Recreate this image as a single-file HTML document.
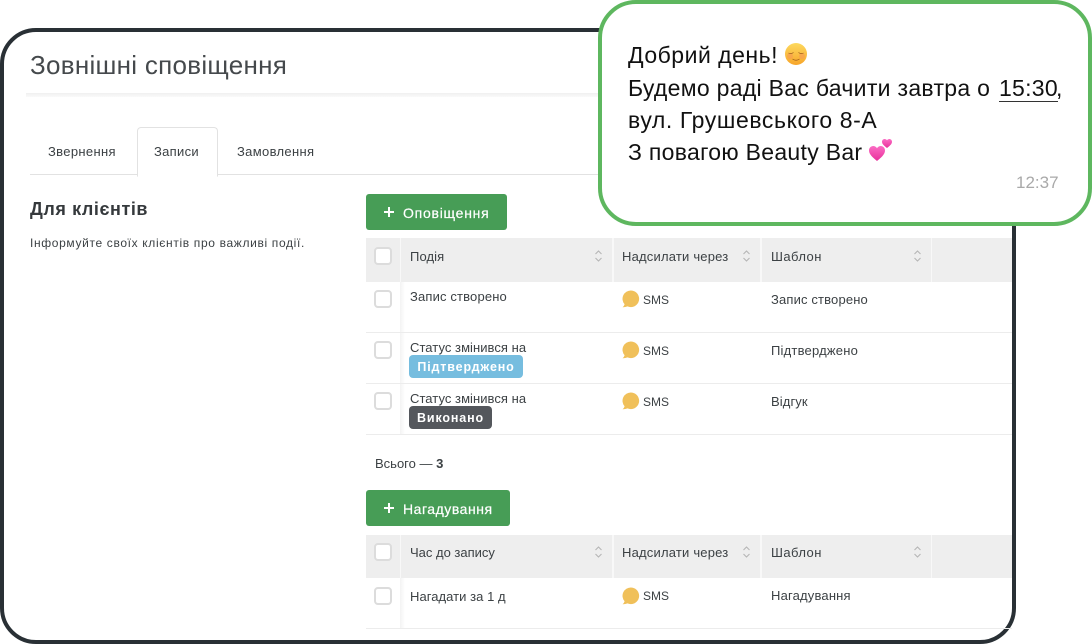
<!DOCTYPE html>
<html lang="uk"><head><meta charset="utf-8"><style>
html,body{margin:0;padding:0}
body{width:1092px;height:644px;background:#fff;overflow:hidden;position:relative;font-family:"Liberation Sans","DejaVu Sans",sans-serif;color:#3c4144}
.a{position:absolute;white-space:nowrap}
.t{font-size:13px;line-height:16px;letter-spacing:.15px}
.s{font-size:12px;line-height:16px;letter-spacing:0}
.frame{position:absolute;left:0;top:28px;width:1008px;height:608px;border:4px solid #293035;border-radius:36px;background:#fff}
.hd{position:absolute;height:44px;background:#eeeeee}
.gap{position:absolute;left:366px;width:646px;background:#f8f8f8}
.cb{position:absolute;left:374px;width:14px;height:14px;border:2px solid #dcdcdc;border-radius:4px;background:#fff}
.line{position:absolute;left:366px;width:646px;height:1px;background:#ececec}
.btn{position:absolute;left:366px;height:36px;background:#479d56;border-radius:3px;color:#fff;font-size:14px;line-height:36px;-webkit-text-stroke:.2px #fff}
.pv{position:absolute;left:18px;top:17px;width:10px;height:2px;background:#fff}
.ph{position:absolute;left:22px;top:13px;width:2px;height:10px;background:#fff}
.dot{position:absolute;left:622px}
.st{position:absolute;width:9px;height:14px}
.lbl{position:absolute;left:409px;height:23px;border-radius:4px;color:#fff;font-weight:700;font-size:12.5px;line-height:25px;text-align:center;letter-spacing:.85px}
.bub{position:absolute;left:598px;top:0;width:486px;height:218px;border:4px solid #5eb75f;border-radius:38px;background:#fff}
.m{position:absolute;left:628px;font-size:23px;line-height:32px;color:#111;white-space:nowrap}
.strip{position:absolute;left:400px;width:5px;background:linear-gradient(to right,#f3f3f3,#fff)}
</style></head><body>
<div class="frame"></div>
<div class="a" style="left:30px;top:49px;font-size:26px;line-height:32px;color:#45494c;letter-spacing:.28px">Зовнішні сповіщення</div>
<div class="a" style="left:26px;top:93px;width:986px;height:4px;background:linear-gradient(#f0f0f0,#fafafa)"></div>
<div class="a" style="left:30px;top:174px;width:982px;height:1px;background:#e2e2e2"></div>
<div class="a" style="left:137px;top:127px;width:79px;height:48px;border:1px solid #e2e2e2;border-bottom:1px solid #fff;border-radius:4px 4px 0 0;background:#fff"></div>
<div class="a t" style="left:48px;top:144px;letter-spacing:.33px">Звернення</div>
<div class="a t" style="left:154px;top:144px;letter-spacing:.3px">Записи</div>
<div class="a t" style="left:237px;top:144px;letter-spacing:.33px">Замовлення</div>
<div class="a" style="left:30px;top:198px;font-size:18px;line-height:22px;font-weight:700;color:#35393c;letter-spacing:.58px">Для клієнтів</div>
<div class="a" style="left:30px;top:235px;font-size:12px;line-height:16px;letter-spacing:.65px">Інформуйте своїх клієнтів про важливі події.</div>

<div class="btn" style="top:194px;width:141px"><span class="pv"></span><span class="ph"></span><span class="a" style="left:37px;top:1px;letter-spacing:.75px">Оповіщення</span></div>

<div class="gap" style="top:238px;height:44px"></div>
<div class="hd" style="left:366px;top:238px;width:34px"></div>
<div class="hd" style="left:401px;top:238px;width:211px"></div>
<div class="hd" style="left:614px;top:238px;width:146px"></div>
<div class="hd" style="left:762px;top:238px;width:169px"></div>
<div class="hd" style="left:932px;top:238px;width:80px"></div>
<div class="cb" style="top:247px"></div>
<div class="a t" style="left:410px;top:249px;letter-spacing:.1px">Подія</div>
<div class="a t" style="left:622px;top:249px;letter-spacing:.2px">Надсилати через</div>
<div class="a t" style="left:771px;top:249px;letter-spacing:.45px">Шаблон</div>
<svg class="st" style="left:594px;top:249px" viewBox="0 0 9 14"><path d="M1.5 5 4.5 2 7.5 5M1.5 9 4.5 12 7.5 9" fill="none" stroke="#b4b4b4" stroke-width="1"/></svg>
<svg class="st" style="left:742px;top:249px" viewBox="0 0 9 14"><path d="M1.5 5 4.5 2 7.5 5M1.5 9 4.5 12 7.5 9" fill="none" stroke="#b4b4b4" stroke-width="1"/></svg>
<svg class="st" style="left:913px;top:249px" viewBox="0 0 9 14"><path d="M1.5 5 4.5 2 7.5 5M1.5 9 4.5 12 7.5 9" fill="none" stroke="#b4b4b4" stroke-width="1"/></svg>

<div class="strip" style="top:282px;height:152px"></div>
<div class="cb" style="top:290px"></div>
<div class="a t" style="left:410px;top:289px">Запис створено</div>
<svg class="dot" style="top:290px" width="18" height="18" viewBox="0 0 18 18"><path d="M9 .5a8.300 8.300 0 1 1-3.500 15.900Q3 17.300 .6 17.200 2.100 16.200 2.600 14.300A8.300 8.300 0 0 1 9 .5z" fill="#f0c05a"/></svg>
<div class="a s" style="left:643px;top:292px">SMS</div>
<div class="a t" style="left:771px;top:292px">Запис створено</div>
<div class="line" style="top:332px"></div>

<div class="cb" style="top:341px"></div>
<div class="a t" style="left:410px;top:340px;letter-spacing:.05px">Статус змінився на</div>
<div class="lbl" style="top:355px;width:114px;background:#76bddf">Підтверджено</div>
<svg class="dot" style="top:341px" width="18" height="18" viewBox="0 0 18 18"><path d="M9 .5a8.300 8.300 0 1 1-3.500 15.900Q3 17.300 .6 17.200 2.100 16.200 2.600 14.300A8.300 8.300 0 0 1 9 .5z" fill="#f0c05a"/></svg>
<div class="a s" style="left:643px;top:343px">SMS</div>
<div class="a t" style="left:771px;top:343px;letter-spacing:.2px">Підтверджено</div>
<div class="line" style="top:383px"></div>

<div class="cb" style="top:392px"></div>
<div class="a t" style="left:410px;top:391px;letter-spacing:.05px">Статус змінився на</div>
<div class="lbl" style="top:406px;width:83px;background:#54575c">Виконано</div>
<svg class="dot" style="top:392px" width="18" height="18" viewBox="0 0 18 18"><path d="M9 .5a8.300 8.300 0 1 1-3.500 15.900Q3 17.300 .6 17.200 2.100 16.200 2.600 14.300A8.300 8.300 0 0 1 9 .5z" fill="#f0c05a"/></svg>
<div class="a s" style="left:643px;top:394px">SMS</div>
<div class="a t" style="left:771px;top:394px;letter-spacing:.1px">Відгук</div>
<div class="line" style="top:434px"></div>

<div class="a t" style="left:375px;top:456px;letter-spacing:0">Всього — <b>3</b></div>

<div class="btn" style="top:490px;width:144px"><span class="pv"></span><span class="ph"></span><span class="a" style="left:37px;top:1px;letter-spacing:.53px">Нагадування</span></div>

<div class="gap" style="top:535px;height:43px"></div>
<div class="hd" style="left:366px;top:535px;width:34px;height:43px"></div>
<div class="hd" style="left:401px;top:535px;width:211px;height:43px"></div>
<div class="hd" style="left:614px;top:535px;width:146px;height:43px"></div>
<div class="hd" style="left:762px;top:535px;width:169px;height:43px"></div>
<div class="hd" style="left:932px;top:535px;width:80px;height:43px"></div>
<div class="cb" style="top:543px"></div>
<div class="a t" style="left:410px;top:545px;letter-spacing:0">Час до запису</div>
<div class="a t" style="left:622px;top:545px;letter-spacing:.2px">Надсилати через</div>
<div class="a t" style="left:771px;top:545px;letter-spacing:.45px">Шаблон</div>
<svg class="st" style="left:594px;top:545px" viewBox="0 0 9 14"><path d="M1.500 5 4.500 2 7.500 5M1.500 9 4.500 12 7.500 9" fill="none" stroke="#b4b4b4" stroke-width="1"/></svg>
<svg class="st" style="left:742px;top:545px" viewBox="0 0 9 14"><path d="M1.500 5 4.500 2 7.500 5M1.500 9 4.500 12 7.500 9" fill="none" stroke="#b4b4b4" stroke-width="1"/></svg>
<svg class="st" style="left:913px;top:545px" viewBox="0 0 9 14"><path d="M1.500 5 4.500 2 7.500 5M1.500 9 4.500 12 7.500 9" fill="none" stroke="#b4b4b4" stroke-width="1"/></svg>

<div class="strip" style="top:578px;height:50px"></div>
<div class="cb" style="top:587px"></div>
<div class="a t" style="left:410px;top:589px;letter-spacing:.05px">Нагадати за 1 д</div>
<svg class="dot" style="top:587px" width="18" height="18" viewBox="0 0 18 18"><path d="M9 .5a8.300 8.300 0 1 1-3.500 15.900Q3 17.300 .6 17.200 2.100 16.200 2.600 14.300A8.300 8.300 0 0 1 9 .5z" fill="#f0c05a"/></svg>
<div class="a s" style="left:643px;top:588px">SMS</div>
<div class="a t" style="left:771px;top:588px;letter-spacing:.18px">Нагадування</div>
<div class="line" style="top:628px"></div>

<div class="bub"></div>
<div class="m" style="top:39px;letter-spacing:.5px">Добрий день!</div>
<svg class="a" style="left:785px;top:43px" width="22" height="22" viewBox="0 0 22 22">
<defs><linearGradient id="g" x1="0" y1="0" x2="0" y2="1"><stop offset="0" stop-color="#fdd95e"/><stop offset="1" stop-color="#f7a52a"/></linearGradient>
<linearGradient id="h" x1="0" y1="0" x2="0" y2="1"><stop offset="0" stop-color="#fb6cc4"/><stop offset="1" stop-color="#e8309a"/></linearGradient></defs>
<circle cx="11" cy="11" r="11" fill="url(#g)"/>
<circle cx="5" cy="13" r="3" fill="#f7925a" opacity=".45"/><circle cx="17" cy="13" r="3" fill="#f7925a" opacity=".45"/>
<path d="M3.500 10Q6 11.500 8.500 9.500M13.500 9.500Q16 11.500 18.500 10M7.500 16Q11 18.500 14.500 16" fill="none" stroke="#9a5a1a" stroke-width=".7"/></svg>
<div class="m" style="top:72px;letter-spacing:.3px">Будемо раді Вас бачити завтра о <span style="border-bottom:1px solid #333;margin-left:2px;margin-right:-2px">15:30</span>,</div>
<div class="m" style="top:104px;letter-spacing:.6px">вул. Грушевського 8-А</div>
<div class="m" style="top:136px;letter-spacing:.3px">З повагою Beauty Bar</div>
<svg class="a" style="left:868px;top:138px" width="25" height="24" viewBox="0 0 25 24">
<path d="M9 23C5 19.500 1 16.500 1 12.500 1 9.800 3 8 5.200 8 6.800 8 8.200 8.800 9 10.200 9.800 8.800 11.200 8 12.800 8 15 8 17 9.800 17 12.500 17 16.500 13 19.500 9 23Z" fill="url(#h)"/>
<path d="M19 10C16.500 8 14 6.300 14 3.800 14 2.200 15.200 1 16.600 1 17.600 1 18.500 1.500 19 2.400 19.500 1.500 20.400 1 21.400 1 22.800 1 24 2.200 24 3.800 24 6.300 21.500 8 19 10Z" fill="url(#h)"/></svg>
<div class="a" style="left:1016px;top:173px;font-size:17px;line-height:20px;color:#a9a9a9">12:37</div>
</body></html>
